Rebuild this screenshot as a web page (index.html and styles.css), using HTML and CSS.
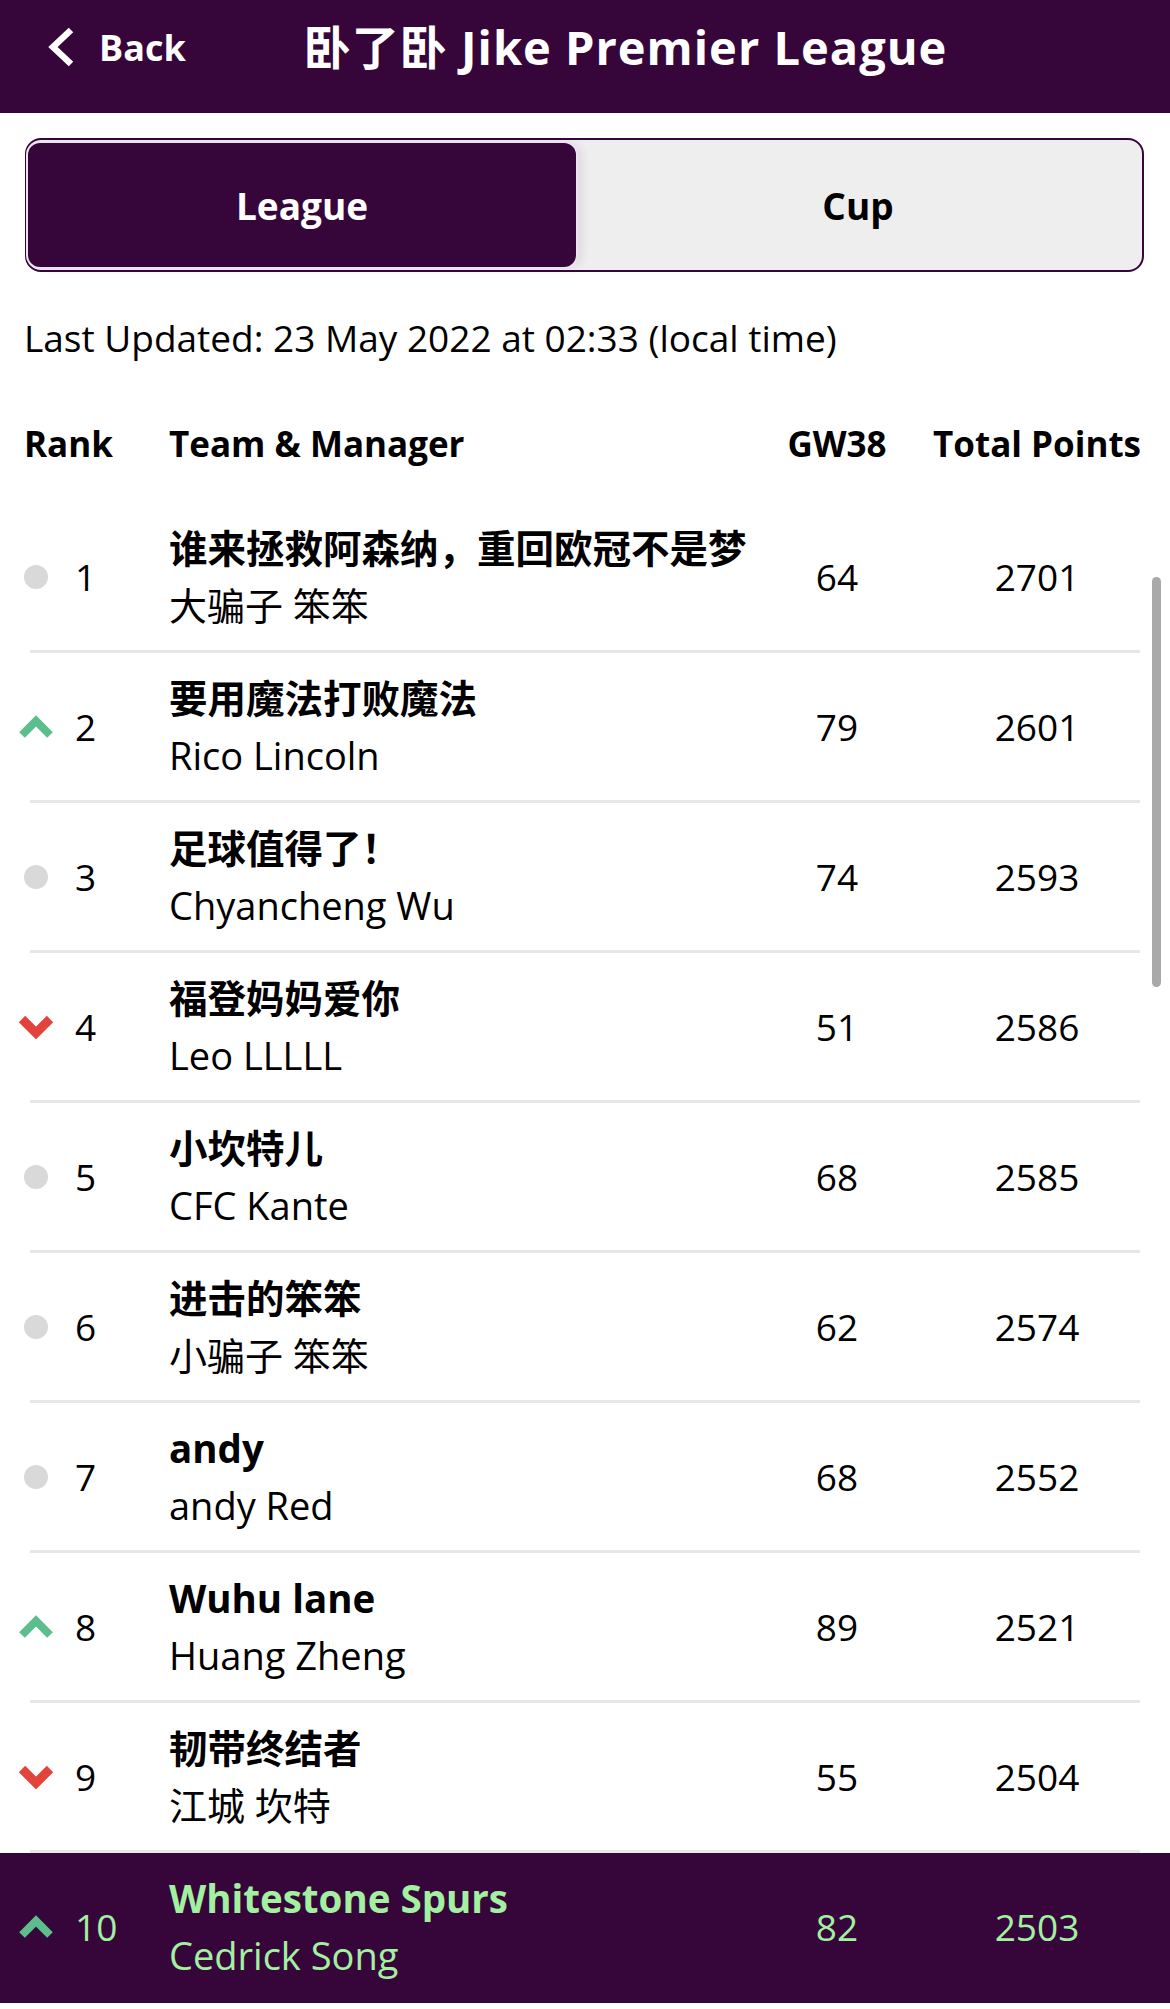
FILE: index.html
```html
<!DOCTYPE html>
<html lang="zh-CN">
<head>
  <meta charset="UTF-8" />
  <meta name="viewport" content="width=device-width, initial-scale=1.0" />
  <title>卧了卧 Jike Premier League</title>
  <link rel="stylesheet" href="styles.css">
</head>
<body>
  <!-- Top bar -->
  <div class="topbar">
    <a class="back" href="#">
      <svg class="back-icon" viewBox="0 0 30 42" width="30" height="42">
        <polyline points="25,4 7,21 25,38" fill="none" stroke="#fff" stroke-width="6.5" />
      </svg>
      Back
    </a>
    <h1 class="title">卧了卧 Jike Premier League</h1>
  </div>

  <div class="page">
    <!-- League / Cup switch -->
    <div class="segmented">
      <div class="seg active">League</div>
      <div class="seg">Cup</div>
    </div>

    <p class="updated">Last Updated: 23 May 2022 at 02:33 (local time)</p>

    <!-- Standings -->
    <div class="thead">
      <div class="th-rank">Rank</div>
      <div>Team &amp; Manager</div>
      <div class="num">GW38</div>
      <div class="num">Total Points</div>
    </div>
    <div class="standings" id="standings"></div>
  </div>

  <div class="scrollbar"></div>

  <script>
    const entries = [
      { rank: 1, move: 'same', team: '谁来拯救阿森纳，重回欧冠不是梦', manager: '大骗子 笨笨', gw: 64, total: 2701 },
      { rank: 2, move: 'up', team: '要用魔法打败魔法', manager: 'Rico Lincoln', gw: 79, total: 2601 },
      { rank: 3, move: 'same', team: '足球值得了！', manager: 'Chyancheng Wu', gw: 74, total: 2593 },
      { rank: 4, move: 'down', team: '福登妈妈爱你', manager: 'Leo LLLLL', gw: 51, total: 2586 },
      { rank: 5, move: 'same', team: '小坎特儿', manager: 'CFC Kante', gw: 68, total: 2585 },
      { rank: 6, move: 'same', team: '进击的笨笨', manager: '小骗子 笨笨', gw: 62, total: 2574 },
      { rank: 7, move: 'same', team: 'andy', manager: 'andy Red', gw: 68, total: 2552 },
      { rank: 8, move: 'up', team: 'Wuhu lane', manager: 'Huang Zheng', gw: 89, total: 2521 },
      { rank: 9, move: 'down', team: '韧带终结者', manager: '江城 坎特', gw: 55, total: 2504 },
      { rank: 10, move: 'up', team: 'Whitestone Spurs', manager: 'Cedrick Song', gw: 82, total: 2503, me: true }
    ];

    const icons = {
      same: '<span class="dot"></span>',
      up: '<svg viewBox="0 0 36 24" width="36" height="24"><polyline points="4,20 18,6 32,20" fill="none" stroke="#5cbf8b" stroke-width="8" /></svg>',
      down: '<svg viewBox="0 0 36 24" width="36" height="24"><polyline points="4,4 18,18 32,4" fill="none" stroke="#e2433a" stroke-width="9" /></svg>'
    };

    const list = document.getElementById('standings');
    entries.forEach(e => {
      const row = document.createElement('div');
      row.className = e.me ? 'row me' : 'row';
      row.innerHTML =
        '<div class="rank"><span class="move">' + icons[e.move] + '</span>' + e.rank + '</div>' +
        '<div class="team">' +
          '<div class="team-name">' + e.team + '</div>' +
          '<div class="manager">' + e.manager + '</div>' +
        '</div>' +
        '<div class="num">' + e.gw + '</div>' +
        '<div class="num">' + e.total + '</div>';
      list.appendChild(row);
    });
  </script>
</body>
</html>
```

FILE: styles.css
```css
body {
  margin: 0;
  font-family: "Open Sans", "Noto Sans CJK SC", sans-serif;
  color: #000;
  background-color: #fff;
}

/* Top bar */
.topbar {
  height: 113px;
  background-color: #36063b;
  color: #fff;
  display: flex;
  align-items: flex-start;
}

.back {
  display: flex;
  align-items: center;
  gap: 23px;
  height: 94px;
  padding-left: 46px;
  color: #fff;
  text-decoration: none;
  font-size: 36px;
  font-weight: bold;
}

.title {
  margin: 0 0 0 118px;
  line-height: 94px;
  font-size: 47px;
  font-weight: bold;
  letter-spacing: 1px;
}

/* Switch */
.page {
  padding-top: 25px;
}

.segmented {
  margin: 0 26px 0 25px;
  height: 134px;
  box-sizing: border-box;
  display: grid;
  grid-template-columns: 548px 1fr;
  padding: 3px 2px 3px 1px;
  border: 2px solid #36063b;
  border-radius: 16px;
  background-color: #eeeeee;
}

.seg {
  display: flex;
  align-items: center;
  justify-content: center;
  font-size: 37px;
  font-weight: bold;
  border-radius: 12px;
}

.seg.active {
  background-color: #36063b;
  color: #fff;
  box-shadow: 0 0 0 2px #efe1f3, 6px 0 10px rgb(0 0 0 / 0.08);
}

.updated {
  margin: 41px 0 0 24px;
  line-height: 50px;
  font-size: 37px;
}

/* Standings table */
.thead,
.row {
  display: grid;
  grid-template-columns: 151px minmax(0, 1fr) 186px 214px;
  align-items: center;
  padding: 0 26px 0 18px;
}

.thead {
  height: 120px;
  margin-top: 20px;
  font-size: 35px;
  font-weight: bold;
}

.th-rank {
  padding-left: 6px;
}

.num {
  text-align: center;
}

.row {
  height: 150px;
  box-sizing: border-box;
  padding-bottom: 3px;
  font-size: 37px;
  background: linear-gradient(#e7e7e7, #e7e7e7) no-repeat 30px 100% / calc(100% - 60px) 3px;
}

.rank {
  display: flex;
  align-items: center;
  gap: 21px;
}

.move {
  width: 36px;
  display: flex;
  justify-content: center;
}

.move svg {
  display: block;
}

.dot {
  width: 24px;
  height: 24px;
  border-radius: 50%;
  background-color: #d9d9d9;
}

.team {
  line-height: 57px;
  white-space: nowrap;
}

.team-name {
  font-weight: bold;
  font-size: 38.5px;
}

.manager {
  font-size: 38px;
}

/* Current user's row */
.row.me {
  background: #36063b;
  color: #a3f0a0;
}

.scrollbar {
  position: absolute;
  top: 577px;
  left: 1152px;
  width: 9px;
  height: 410px;
  border-radius: 5px;
  background-color: #a9a9a9;
}
```
